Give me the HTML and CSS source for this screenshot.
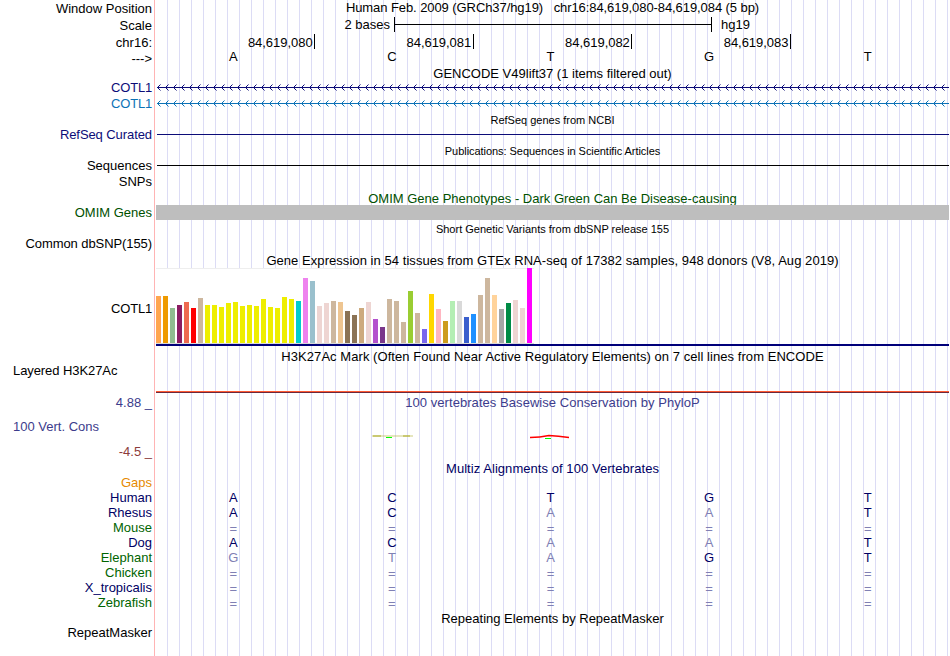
FILE: index.html
```html
<!DOCTYPE html>
<html lang="en">
<head>
  <meta charset="UTF-8">
  <title>Genome Browser chr16:84,619,080-84,619,084</title>
  <link rel="stylesheet" href="styles.css">
</head>
<body>
<div class="browser">

  <!-- ruler -->
  <div class="row h16"><div class="label">Window Position</div><div class="track title up tight"><span>Human Feb. 2009 (GRCh37/hg19) &nbsp; chr16:84,619,080-84,619,084 (5 bp)</span></div></div>
  <div class="row h17">
    <div class="label down">Scale</div>
    <div class="track scale"><span class="scale-left">2 bases</span><div class="scale-bar"></div><span class="scale-right">hg19</span></div>
  </div>
  <div class="row h17">
    <div class="label down">chr16:</div>
    <div class="track ticks"><span>84,619,080</span><span>84,619,081</span><span>84,619,082</span><span>84,619,083</span></div>
  </div>
  <div class="row h16">
    <div class="label">---&gt;</div>
    <div class="track bases top"><span>A</span><span>C</span><span>T</span><span>G</span><span>T</span></div>
  </div>

  <!-- genes -->
  <div class="row h13"><div class="label"></div><div class="track title gencode"><span>GENCODE V49lift37 (1 items filtered out)</span></div></div>
  <div class="row h16">
    <div class="label navy tighter">COTL1</div>
    <svg class="track gene navy" width="793" height="7"><defs><pattern id="arrowNavy" x="1" width="8" height="7" patternUnits="userSpaceOnUse"><path fill="currentColor" d="M0 3h1v1h-1zM1 2h1v1h-1zM1 4h1v1h-1zM2 1h1v1h-1zM2 5h1v1h-1z"/><path fill="currentColor" opacity=".5" d="M3 0h1v1h-1zM3 6h1v1h-1z"/></pattern></defs><rect width="792" height="7" x="1" fill="url(#arrowNavy)"/><rect x="1" y="3" width="792" height="1" fill="currentColor"/></svg>
  </div>
  <div class="row h16">
    <div class="label blue tighter">COTL1</div>
    <svg class="track gene blue" width="793" height="7"><defs><pattern id="arrowBlue" x="1" width="8" height="7" patternUnits="userSpaceOnUse"><path fill="currentColor" d="M0 3h1v1h-1zM1 2h1v1h-1zM1 4h1v1h-1zM2 1h1v1h-1zM2 5h1v1h-1z"/><path fill="currentColor" opacity=".5" d="M3 0h1v1h-1zM3 6h1v1h-1z"/></pattern></defs><rect width="792" height="7" x="1" fill="url(#arrowBlue)"/><rect x="1" y="3" width="792" height="1" fill="currentColor"/></svg>
  </div>
  <div class="row h16"><div class="label"></div><div class="track title small down"><span>RefSeq genes from NCBI</span></div></div>
  <div class="row h15"><div class="label navy tight">RefSeq Curated</div><div class="track line navy"></div></div>
  <div class="row h16"><div class="label"></div><div class="track title small down pubs"><span>Publications: Sequences in Scientific Articles</span></div></div>
  <div class="row h15"><div class="label">Sequences</div><div class="track line"></div></div>
  <div class="row h16"><div class="label">SNPs</div><div class="track"></div></div>
  <div class="row h16"><div class="label"></div><div class="track title omim down"><span>OMIM Gene Phenotypes - Dark Green Can Be Disease-causing</span></div></div>
  <div class="row h15"><div class="label omim">OMIM Genes</div><div class="track omim-bar"></div></div>
  <div class="row h16"><div class="label"></div><div class="track title small down"><span>Short Genetic Variants from dbSNP release 155</span></div></div>
  <div class="row h15"><div class="label tight">Common dbSNP(155)</div><div class="track"></div></div>

  <!-- expression -->
  <div class="row h17"><div class="label"></div><div class="track title down loose"><span>Gene Expression in 54 tissues from GTEx RNA-seq of 17382 samples, 948 donors (V8, Aug 2019)</span></div></div>
  <div class="row gtex">
    <div class="label down tighter">COTL1</div>
    <div class="track gtex-track"><div class="chart" id="chart"></div></div>
  </div>

  <!-- regulation -->
  <div class="row h18"><div class="label"></div><div class="track title down loose"><span>H3K27Ac Mark (Often Found Near Active Regulatory Elements) on 7 cell lines from ENCODE</span></div></div>
  <div class="row h29"><div class="label left h3k-label tight">Layered H3K27Ac</div><div class="track h3k"></div></div>

  <!-- conservation -->
  <div class="row cons-top"><div class="label cons">4.88 _</div><div class="track title cons loose"><span>100 vertebrates Basewise Conservation by PhyloP</span></div></div>
  <div class="row cons-mid">
    <div class="label left cons cons-label">100 Vert. Cons</div>
    <svg class="track" width="793" height="32">
      <path d="M217 24h8M247 24h7" stroke="#b9b740" stroke-width="2" opacity=".6"/>
      <path d="M216 24h41" stroke="#b9b740" stroke-width="1.5" opacity=".45"/>
      <path d="M374 25.5q10 -.2 19 -2q9 .6 20 2" fill="none" stroke="#f00" stroke-width="1.4"/>
      <path d="M230 25h6v1h-6zM389 26h6v1h-6z" fill="#0f0"/>
    </svg>
  </div>
  <div class="row h16"><div class="label cons-neg up">-4.5 _</div><div class="track"></div></div>
  <div class="row h15"><div class="label"></div><div class="track title multiz down loose"><span>Multiz Alignments of 100 Vertebrates</span></div></div>
  <div class="row h15"><div class="label gaps">Gaps</div><div class="track"></div></div>
  <div class="row h15"><div class="label multiz">Human</div><div class="track bases"><span>A</span><span>C</span><span>T</span><span>G</span><span>T</span></div></div>
  <div class="row h15"><div class="label multiz">Rhesus</div><div class="track bases"><span>A</span><span>C</span><span class="diff">A</span><span class="diff">A</span><span>T</span></div></div>
  <div class="row h15"><div class="label green">Mouse</div><div class="track bases none"><span>=</span><span>=</span><span>=</span><span>=</span><span>=</span></div></div>
  <div class="row h15"><div class="label multiz">Dog</div><div class="track bases"><span>A</span><span>C</span><span class="diff">A</span><span class="diff">A</span><span>T</span></div></div>
  <div class="row h15"><div class="label green">Elephant</div><div class="track bases"><span class="diff">G</span><span class="diff">T</span><span class="diff">A</span><span>G</span><span>T</span></div></div>
  <div class="row h15"><div class="label green">Chicken</div><div class="track bases none"><span>=</span><span>=</span><span>=</span><span>=</span><span>=</span></div></div>
  <div class="row h15"><div class="label multiz">X_tropicalis</div><div class="track bases none"><span>=</span><span>=</span><span>=</span><span>=</span><span>=</span></div></div>
  <div class="row h15"><div class="label green">Zebrafish</div><div class="track bases none"><span>=</span><span>=</span><span>=</span><span>=</span><span>=</span></div></div>
  <div class="row h15"><div class="label"></div><div class="track title down"><span>Repeating Elements by RepeatMasker</span></div></div>
  <div class="row h15"><div class="label">RepeatMasker</div><div class="track"></div></div>
</div>

<script>
  // height and colour for each GTEx tissue
  var tissues = [
    [47,"#ffa54f"],[47,"#ee9a00"],[35,"#8fbc8f"],[38,"#8b1c62"],[41,"#ee6a50"],[35,"#ff0000"],[45,"#cdb79e"],
    [38,"#eeee00"],[38,"#eeee00"],[36,"#eeee00"],[40,"#eeee00"],[41,"#eeee00"],[37,"#eeee00"],[38,"#eeee00"],
    [37,"#eeee00"],[44,"#eeee00"],[36,"#eeee00"],[35,"#eeee00"],[46,"#eeee00"],[44,"#eeee00"],[42,"#00cdcd"],
    [65,"#ee82ee"],[62,"#9ac0cd"],[37,"#eed5d2"],[40,"#eed5d2"],[42,"#cdb79e"],[41,"#eec591"],[32,"#8b7355"],
    [28,"#8b7355"],[35,"#cdaa7d"],[41,"#eed5d2"],[24,"#b452cd"],[16,"#7a378b"],[44,"#cdb79e"],[42,"#cdb79e"],
    [21,"#cdb79e"],[52,"#9acd32"],[30,"#cdb79e"],[14,"#7a67ee"],[49,"#ffd700"],[34,"#ffb6c1"],[22,"#cd9b1d"],
    [42,"#b4eeb4"],[42,"#d9d9d9"],[26,"#3a5fcd"],[29,"#1e90ff"],[48,"#cdb79e"],[65,"#cdb79e"],[48,"#ffd39b"],
    [34,"#a6a6a6"],[40,"#008b45"],[43,"#eed5d2"],[35,"#eed5d2"],[75,"#ff00ff"]
  ];
  var chart = document.getElementById("chart");
  tissues.forEach(function (t) {
    var bar = document.createElement("div");
    bar.className = "bar";
    bar.style.height = t[0] + "px";
    bar.style.backgroundColor = t[1];
    chart.appendChild(bar);
  });
</script>
</body>
</html>
```
FILE: styles.css
```css
body {
  margin: 0;
  background-color: #fff;
  font-family: "Liberation Sans", Arial, Helvetica, sans-serif;
  font-size: 13px;
  line-height: 15px;
  color: #000;
  overflow: hidden;
}

/* pink divider and the guide lines behind every track */
.browser {
  width: 950px;
  height: 656px;
  background-image:
    linear-gradient(#ffb4b4, #ffb4b4),
    repeating-linear-gradient(to right, #dcdcf5 0, #dcdcf5 1px, transparent 1px, transparent 12px);
  background-size: 1px 100%, 782px 100%;
  background-position: 154px 0, 167px 0;
  background-repeat: no-repeat;
}

.row {
  display: flex;
  align-items: center;
  white-space: nowrap;
}
.h13 { height: 13px; }
.h15 { height: 15px; }
.h16 { height: 16px; }
.h17 { height: 17px; }
.h18 { height: 18px; }
.h29 { height: 29px; }

.label {
  width: 152px;
  flex: none;
  text-align: right;
  margin-right: 4px;
}
.label.left {
  text-align: left;
  padding-left: 13px;
  box-sizing: border-box;
}
.track {
  width: 793px;
  flex: none;
}
.title {
  text-align: center;
}
.small {
  font-size: 11px;
}
.up { padding-bottom: 1px; }
.down { padding-top: 2px; }
.gencode { padding-top: 1px; }
.tight { letter-spacing: -0.08px; }
.tighter { letter-spacing: -0.2px; }
.loose { letter-spacing: 0.055px; }
.pubs { letter-spacing: -0.05px; }

.navy { color: #0c0c78; }
.blue { color: #0c72b6; }
.omim { color: #005000; }
.cons { color: #3c3c8c; }
.cons-neg { color: #8c3c3c; }
.multiz { color: #000064; }
.green { color: #006400; }
.gaps { color: #e68a00; }

.scale {
  display: flex;
  align-items: center;
}
.scale-left {
  width: 234px;
  margin-right: 4px;
  text-align: right;
}
.scale-bar {
  width: 316px;
  height: 15px;
  border-left: 1px solid #000;
  border-right: 1px solid #000;
  background: linear-gradient(#000, #000) 0 7px / 100% 1px no-repeat;
}
.scale-right {
  margin-left: 9px;
}

.ticks, .bases {
  display: grid;
  grid-template-columns: repeat(5, 158.6px);
}
.ticks {
  padding-left: 0.4px;
}
.ticks span {
  height: 14px;
  padding-top: 1px;
  text-align: right;
  border-right: 1px solid #000;
  padding-right: 1.4px;
  letter-spacing: -0.04px;
}
.bases {
  color: #000064;
  text-align: center;
}
.bases span {
  padding-right: 4px;
}
.bases.top {
  color: #000;
  padding-bottom: 3px;
}
.bases .diff, .bases.none {
  color: #8080b4;
}
.bases.none {
  padding-top: 2px;
}

.gene {
  shape-rendering: crispEdges;
}
.line {
  height: 1px;
  width: 792px;
  margin-left: 1px;
  background-color: currentColor;
}
.omim-bar {
  height: 15px;
  background-color: #bebebe;
}

.gtex {
  height: 78px;
}
.gtex-track {
  height: 78px;
  box-sizing: border-box;
  border-bottom: 2px solid #00007a;
}
.chart {
  width: 378px;
  height: 76px;
  box-sizing: border-box;
  display: flex;
  align-items: flex-end;
  gap: 2px;
  background-color: #fff;
  border-bottom: 1px solid #d9d9d9;
  box-shadow: inset 0 1px #eee;
}
.bar {
  width: 5px;
}

.h3k-label {
  align-self: flex-start;
  margin-top: -1px;
}
.h3k {
  height: 29px;
  box-sizing: border-box;
  border-bottom: 1px solid #6e283c;
  box-shadow: inset 0 -1px #ff5a32;
}
.cons-top { height: 19px; }
.cons-mid { height: 32px; }
.cons-label { padding-bottom: 4px; }
```
